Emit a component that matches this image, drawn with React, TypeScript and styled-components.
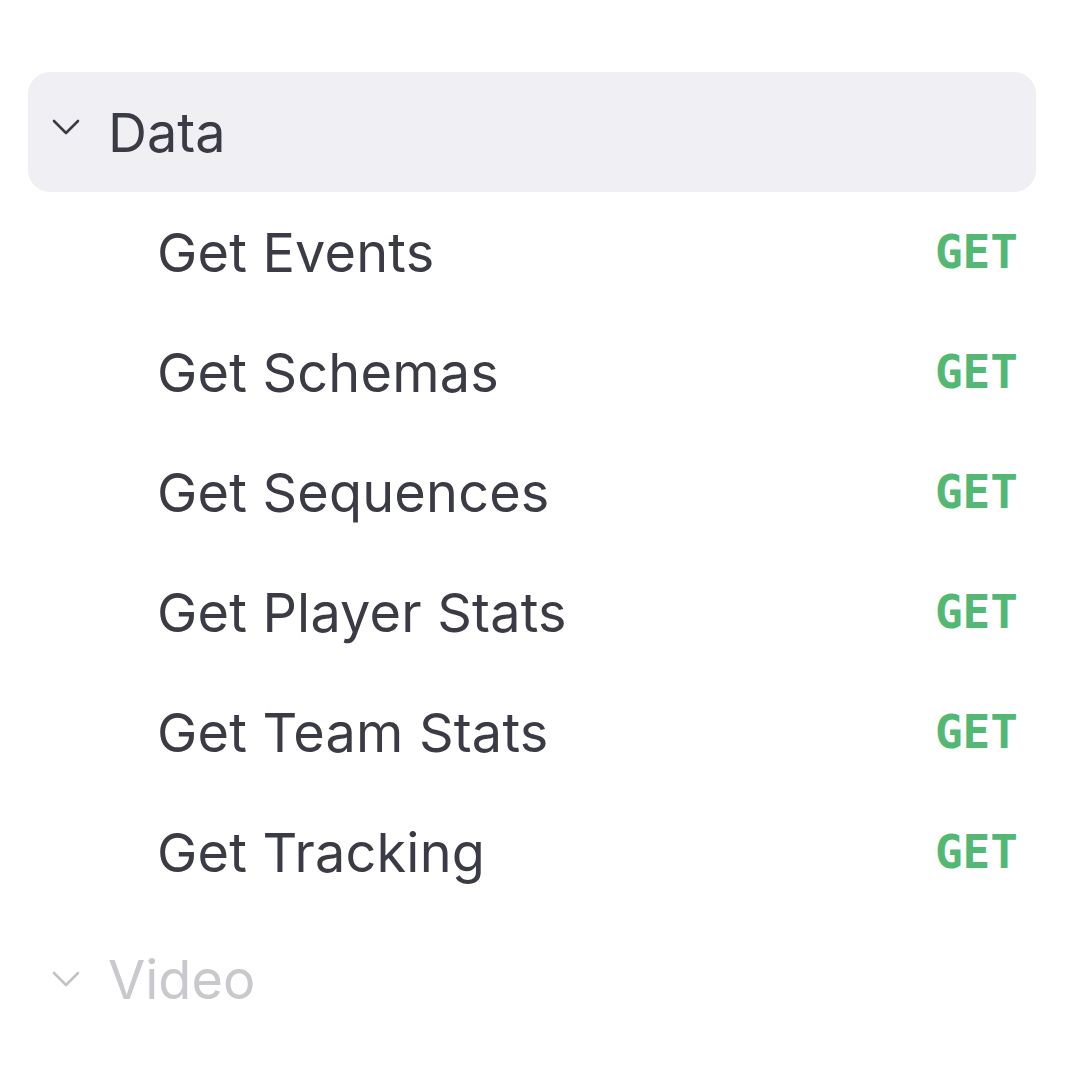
import styled, { createGlobalStyle } from 'styled-components';

const Global = createGlobalStyle`
    html, body {
        margin: 0;
        padding: 0;
        background: #ffffff;
    }
    body {
        font-family: Inter, "Noto Sans", sans-serif;
    }
`;

const Sidebar = styled.nav`
    display: flex;
    flex-direction: column;
    width: 1008px;
    padding: 72px 0 0 28px;
`;

const Group = styled.section`
    display: flex;
    flex-direction: column;
    margin-bottom: 7px;
`;

const GroupHeader = styled.div<{ $active?: boolean }>`
    display: flex;
    align-items: center;
    height: 120px;
    padding-left: 24px;
    gap: 28px;
    border-radius: 22px;
    background-color: ${p => (p.$active ? '#efeff4' : 'transparent')};
    color: ${p => (p.$active ? '#3b3b45' : '#c9c9cd')};
    font-size: 54px;
`;

const Chevron = styled.svg<{ $muted?: boolean }>`
    width: 28px;
    height: 16px;
    margin-top: ${p => (p.$muted ? '0' : '-10px')};
    color: ${p => (p.$muted ? '#c3c3c7' : '#3b3b45')};
    flex-shrink: 0;
`;

const Item = styled.div`
    display: flex;
    align-items: center;
    justify-content: space-between;
    height: 120px;
    padding: 0 18px 0 129px;
    color: #3b3b45;
    font-size: 54px;
    letter-spacing: 0.2px;
`;

const Method = styled.span`
    font-family: "DejaVu Sans Mono", "Liberation Mono", monospace;
    font-weight: 700;
    font-size: 46px;
    letter-spacing: 0;
    color: #52b873;
`;

type Endpoint = { name: string; method: string };

const endpoints: Endpoint[] = [
    { name: 'Get Events', method: 'GET' },
    { name: 'Get Schemas', method: 'GET' },
    { name: 'Get Sequences', method: 'GET' },
    { name: 'Get Player Stats', method: 'GET' },
    { name: 'Get Team Stats', method: 'GET' },
    { name: 'Get Tracking', method: 'GET' },
];

const Arrow = ({ muted }: { muted?: boolean }) => (
    <Chevron $muted={muted} viewBox="0 0 28 16" fill="none">
        <path d="M2 2 L14 14 L26 2" stroke="currentColor" strokeWidth="2.6" strokeLinecap="round" strokeLinejoin="round" />
    </Chevron>
);

const App = () => {
    return (
        <>
            <Global />
            <Sidebar>
                <Group>
                    <GroupHeader $active>
                        <Arrow />
                        <span>Data</span>
                    </GroupHeader>
                    {endpoints.map(e => (
                        <Item key={e.name}>
                            <span>{e.name}</span>
                            <Method>{e.method}</Method>
                        </Item>
                    ))}
                </Group>
                <Group>
                    <GroupHeader>
                        <Arrow muted />
                        <span>Video</span>
                    </GroupHeader>
                </Group>
            </Sidebar>
        </>
    );
};

export default App;
